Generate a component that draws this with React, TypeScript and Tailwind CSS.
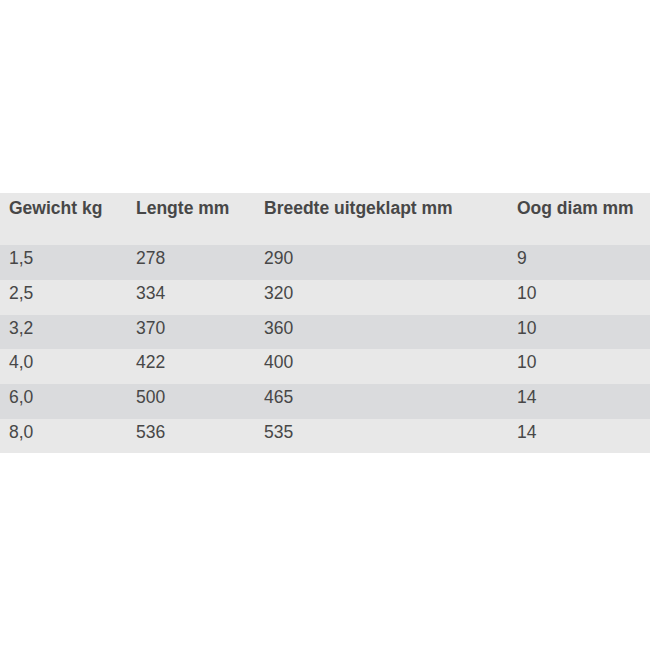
const header = ['Gewicht kg', 'Lengte mm', 'Breedte uitgeklapt mm', 'Oog diam mm']

const rows = [
  { h: 'h-[35px]', cells: ['1,5', '278', '290', '9'] },
  { h: 'h-[35px]', cells: ['2,5', '334', '320', '10'] },
  { h: 'h-[34px]', cells: ['3,2', '370', '360', '10'] },
  { h: 'h-[35px]', cells: ['4,0', '422', '400', '10'] },
  { h: 'h-[35px]', cells: ['6,0', '500', '465', '14'] },
  { h: 'h-[34px]', cells: ['8,0', '536', '535', '14'] },
]

const cols = 'grid grid-cols-[127px_128px_253px_142px]'

export default function App() {
  return (
    <div className="w-[650px] h-[650px] bg-white pt-[193px] font-['Liberation_Sans',Arial,sans-serif] text-[17.5px] text-[#474747]">
      <div className="w-[650px]">
        {/* Header */}
        <div className={`${cols} h-[52px] bg-[#e8e8e8] font-bold`}>
          {header.map((h) => (
            <div key={h} className="pl-[9px] pt-[5px] leading-[20px] whitespace-nowrap">
              {h}
            </div>
          ))}
        </div>

        {/* Rows */}
        {rows.map((row, i) => (
          <div
            key={i}
            className={`${cols} ${row.h} ${i % 2 === 0 ? 'bg-[#dadbdd]' : 'bg-[#e8e8e8]'}`}
          >
            {row.cells.map((cell, j) => (
              <div key={j} className="pl-[9px] pt-[3px] leading-[20px]">
                {cell}
              </div>
            ))}
          </div>
        ))}
      </div>
    </div>
  )
}
